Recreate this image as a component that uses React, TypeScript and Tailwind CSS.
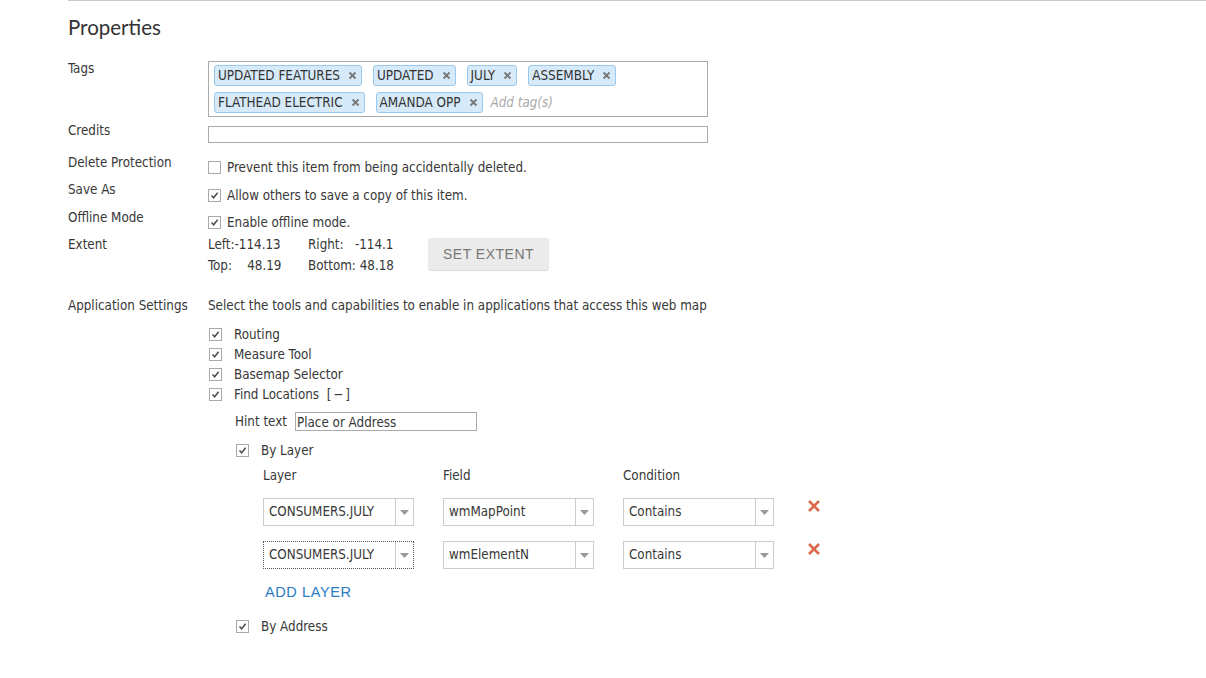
import React from "react";

const tags = [
  ["UPDATED FEATURES", "UPDATED", "JULY", "ASSEMBLY"],
  ["FLATHEAD ELECTRIC", "AMANDA OPP"],
];

function Check({ checked = true }: { checked?: boolean }) {
  return (
    <span className="inline-flex h-[13px] w-[13px] shrink-0 items-center justify-center border border-[#a9a9a9] bg-white">
      {checked && (
        <svg width="9" height="9" viewBox="0 0 9 9">
          <path d="M1.5 4.6 L3.6 6.8 L7.6 1.8" fill="none" stroke="#4a4a4a" strokeWidth="1.5" />
        </svg>
      )}
    </span>
  );
}

function Tag({ text }: { text: string }) {
  return (
    <span className="inline-flex h-[21px] items-center gap-[8px] rounded-[3px] border border-[#99c9ec] bg-[#d7eaf9] pl-[3px] pr-[4px] text-[13.4px] text-[#333]">
      {text}
      <svg width="9" height="9" viewBox="0 0 9 9">
        <path d="M1.5 1.5 L7.5 7.5 M7.5 1.5 L1.5 7.5" stroke="#777" strokeWidth="1.8" />
      </svg>
    </span>
  );
}

function Select({ value, focused = false }: { value: string; focused?: boolean }) {
  return (
    <div
      className={`flex h-[28px] w-[151px] items-stretch bg-white ${
        focused ? "border border-dotted border-[#555]" : "border border-[#ccc]"
      }`}
    >
      <div className="flex flex-1 items-center pl-[5px]">{value}</div>
      <div className="flex w-[18px] items-center justify-center border-l border-[#ccc]">
        <svg width="9" height="5" viewBox="0 0 9 5" className="mt-[2px]">
          <path d="M0 0 H9 L4.5 5 Z" fill="#999" />
        </svg>
      </div>
    </div>
  );
}

function RemoveX() {
  return (
    <svg width="14" height="14" viewBox="0 0 14 14">
      <path d="M2 2 L12 12 M12 2 L2 12" stroke="#d9694a" strokeWidth="2.6" />
    </svg>
  );
}

function CheckItem({ label, gap = "gap-[12px]" }: { label: React.ReactNode; gap?: string }) {
  return (
    <div className={`flex h-[20px] items-center ${gap}`}>
      <Check />
      <span className="mt-[1px]">{label}</span>
    </div>
  );
}

export default function App() {
  return (
    <div
      className="min-h-[678px] bg-white text-[13.3px] leading-none text-[#383838]"
      style={{ fontFamily: '"DejaVu Sans Condensed", "Liberation Sans", sans-serif' }}
    >
      <div className="ml-[68px] h-px bg-[#c9c9c9]" />
      <div className="pl-[68px]">
        {/* Heading */}
        <div className="h-[49px] pt-[15px]">
          <h1 className="text-[20.5px] leading-[22px] text-[#333]" style={{ fontFamily: "Lato, sans-serif" }}>
            Properties
          </h1>
        </div>

        {/* Tags */}
        <div className="grid h-[70px] grid-cols-[140px_1fr] pt-[11px]">
          <div className="pt-[1px]">Tags</div>
          <div className="flex h-[56px] w-[500px] flex-col gap-[6px] border border-[#aaa] px-[5px] pt-[3px]">
            <div className="flex gap-[11px]">
              {tags[0].map((t) => (
                <Tag key={t} text={t} />
              ))}
            </div>
            <div className="flex items-center gap-[11px]">
              {tags[1].map((t) => (
                <Tag key={t} text={t} />
              ))}
              <span className="-ml-[3px] italic text-[#aaa]">Add tag(s)</span>
            </div>
          </div>
        </div>

        {/* Credits */}
        <div className="grid h-[30px] grid-cols-[140px_1fr]">
          <div className="pt-[4px]">Credits</div>
          <div className="pt-[6px]">
            <div className="h-[17px] w-[500px] border border-[#aaa]" />
          </div>
        </div>

        {/* Delete protection */}
        <div className="grid h-[28px] grid-cols-[140px_1fr]">
          <div className="pt-[6px]">Delete Protection</div>
          <div className="flex items-center gap-[6px] self-start pt-[10px]">
            <Check checked={false} />
            <span className="mt-[1px]">Prevent this item from being accidentally deleted.</span>
          </div>
        </div>

        <div className="grid h-[28px] grid-cols-[140px_1fr]">
          <div className="pt-[5px]">Save As</div>
          <div className="flex items-center gap-[6px] self-start pt-[10px]">
            <Check />
            <span className="mt-[1px]">Allow others to save a copy of this item.</span>
          </div>
        </div>

        <div className="grid h-[27px] grid-cols-[140px_1fr]">
          <div className="pt-[5px]">Offline Mode</div>
          <div className="flex items-center gap-[6px] self-start pt-[9px]">
            <Check />
            <span className="mt-[1px]">Enable offline mode.</span>
          </div>
        </div>

        {/* Extent */}
        <div className="grid h-[57px] grid-cols-[140px_1fr]">
          <div className="pt-[5px]">Extent</div>
          <div className="flex items-start">
            <div className="grid grid-cols-[100px_100px] gap-y-[8px] pt-[5px]">
              <span>Left:-114.13</span>
              <span>Right:&nbsp;&nbsp;&nbsp;-114.1</span>
              <span>Top:&nbsp;&nbsp;&nbsp;&nbsp;48.19</span>
              <span>Bottom: 48.18</span>
            </div>
            <div className="pt-[5px]">
              <button
                className="ml-[20px] h-[32px] w-[121px] rounded-[3px] bg-[#ebebeb] text-[14px] tracking-[0.5px] text-[#777] shadow-[0_1px_1px_rgba(0,0,0,0.15)]"
                style={{ fontFamily: '"Liberation Sans", sans-serif' }}
              >
                SET EXTENT
              </button>
            </div>
          </div>
        </div>

        {/* Application settings */}
        <div className="grid grid-cols-[140px_1fr] pt-[8px]">
          <div className="pt-[1px]">Application Settings</div>
          <div>
            <div className="pt-[1px]">Select the tools and capabilities to enable in applications that access this web map</div>
            <div className="mt-[12px] pl-[1px]">
              <CheckItem label="Routing" />
              <CheckItem label="Measure Tool" />
              <CheckItem label="Basemap Selector" />
              <CheckItem
                label={
                  <>
                    Find Locations&nbsp;&nbsp;<span className="tracking-[2px]">[−]</span>
                  </>
                }
              />
            </div>

            <div className="mt-[8px] flex items-center gap-[8px] pl-[27px]">
              <span>Hint text</span>
              <div className="flex h-[19px] w-[182px] items-center border border-[#aaa] pl-[1px] pt-[1px]">
                Place or Address
              </div>
            </div>

            <div className="mt-[9px] pl-[28px]">
              <CheckItem label="By Layer" />
            </div>

            <div className="pl-[55px]">
              <div className="mt-[9px] flex">
                <span className="w-[180px]">Layer</span>
                <span className="w-[180px]">Field</span>
                <span>Condition</span>
              </div>
              <div className="mt-[15px] flex flex-col gap-[15px]">
                {[
                  ["CONSUMERS.JULY", "wmMapPoint"],
                  ["CONSUMERS.JULY", "wmElementN"],
                ].map(([layer, field], i) => (
                  <div key={i} className="flex items-center gap-[29px]">
                    <Select value={layer} focused={i === 1} />
                    <Select value={field} />
                    <Select value="Contains" />
                    <div className="ml-[4px] -mt-[12px]">
                      <RemoveX />
                    </div>
                  </div>
                ))}
              </div>
              <div
                className="mt-[16px] pl-[2px] text-[14.5px] tracking-[0.6px] text-[#2b7bc4]"
                style={{ fontFamily: '"Liberation Sans", sans-serif' }}
              >
                ADD LAYER
              </div>
            </div>

            <div className="mt-[17px] pl-[28px]">
              <CheckItem label="By Address" />
            </div>
          </div>
        </div>
      </div>
    </div>
  );
}
